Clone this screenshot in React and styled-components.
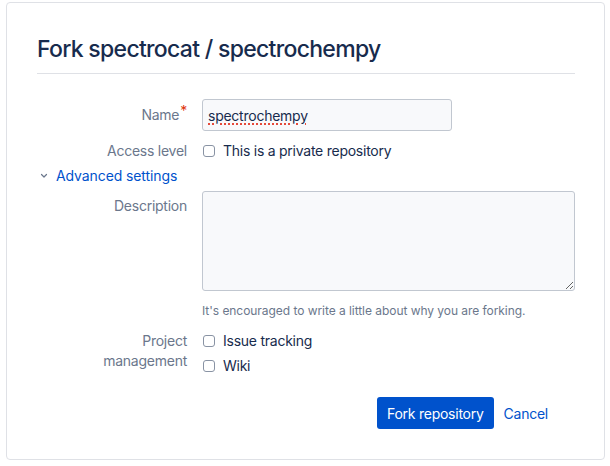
import React from 'react';
import styled, { createGlobalStyle } from 'styled-components';

const GlobalStyle = createGlobalStyle`
  body {
    margin: 0;
    background: #fff;
    font-family: Inter, "Noto Sans", "Liberation Sans", sans-serif;
    color: #172b4d;
  }
`;

const Page = styled.div`
  padding: 2px 6px 0 6px;
  width: 610px;
  box-sizing: border-box;
`;

const Card = styled.div`
  width: 599px;
  box-sizing: border-box;
  border: 1px solid #dfe1e6;
  border-radius: 4px;
  padding: 32px 29px 30px 30px;
`;

const Title = styled.h1`
  margin: 0;
  font-size: 23px;
  line-height: 28px;
  font-weight: 500;
  letter-spacing: -0.7px;
  color: #172b4d;
  padding-bottom: 10px;
  border-bottom: 1px solid #dfe1e6;
`;

const Form = styled.form`
  display: flex;
  flex-direction: column;
  margin-top: 25px;
  letter-spacing: -0.25px;
`;

const Row = styled.div`
  display: grid;
  grid-template-columns: 150px 1fr;
  column-gap: 15px;
  align-items: ${({ $center }) => ($center ? 'center' : 'start')};
  margin-top: ${({ $mt }) => $mt || 0}px;
`;

const Label = styled.label`
  text-align: right;
  font-size: 14px;
  line-height: 20px;
  color: #6b778c;
  padding-top: ${({ $pt }) => $pt || 0}px;
`;

const Required = styled.span`
  color: #de350b;
  font-size: 14px;
  vertical-align: top;
  position: relative;
  top: -4px;
  margin-left: 1px;
`;

const Field = styled.div`
  width: 250px;
  height: 32px;
  box-sizing: border-box;
  border: 1px solid #c1c7d0;
  border-radius: 3px;
  background: #f8f9fb;
  padding: 0 5px;
  display: flex;
  align-items: center;
  font-size: 14px;
  letter-spacing: -0.25px;
  color: #172b4d;
`;

const Misspelled = styled.span`
  text-decoration-line: underline;
  text-decoration-style: dotted;
  text-decoration-color: #e5493a;
  text-decoration-thickness: 2px;
  text-underline-offset: 3px;
`;

const TextArea = styled.textarea`
  width: 373px;
  height: 100px;
  box-sizing: border-box;
  border: 1px solid #c1c7d0;
  border-radius: 3px;
  background: #f8f9fb;
  font-family: inherit;
  font-size: 14px;
  display: block;
  outline: none;
`;

const Help = styled.div`
  font-size: 12px;
  line-height: 16px;
  color: #6b778c;
  letter-spacing: -0.05px;
`;

const Checks = styled.div`
  display: flex;
  flex-direction: column;
  gap: 5px;
`;

const Check = styled.label`
  display: flex;
  align-items: center;
  gap: 8px;
  font-size: 14px;
  line-height: 20px;
  color: #172b4d;
  padding-left: 1px;
`;

const Box = styled.input.attrs({ type: 'checkbox' })`
  appearance: none;
  margin: 0;
  width: 12px;
  height: 12px;
  border: 1px solid #8993a4;
  border-radius: 3px;
  background: #fff;
  box-sizing: border-box;
`;

const Toggle = styled.button`
  display: flex;
  align-items: center;
  gap: 8px;
  border: 0;
  background: none;
  padding: 0 0 0 3px;
  margin-top: 5px;
  font-family: inherit;
  font-size: 14px;
  line-height: 20px;
  letter-spacing: -0.1px;
  color: #0052cc;
  cursor: pointer;
  align-self: flex-start;
`;

const Actions = styled.div`
  display: flex;
  justify-content: flex-end;
  align-items: center;
  margin-top: 21px;
  padding-right: 17px;
`;

const Button = styled.button`
  height: 32px;
  border: 0;
  border-radius: 3px;
  padding: 0 10px;
  font-family: inherit;
  font-size: 14px;
  letter-spacing: -0.25px;
  cursor: pointer;
  background: ${({ $primary }) => ($primary ? '#0052cc' : 'transparent')};
  color: ${({ $primary }) => ($primary ? '#fff' : '#0052cc')};
`;

const Chevron = () => (
  <svg width="8" height="6" viewBox="0 0 8 6" fill="none">
    <path d="M1.5 1.5 L4 4 L6.5 1.5" stroke="#6b778c" strokeWidth="1.2" strokeLinecap="round" strokeLinejoin="round" />
  </svg>
);

export default function App() {
  return (
    <Page>
      <GlobalStyle />
      <Card>
        <Title>Fork spectrocat / spectrochempy</Title>
        <Form onSubmit={(e) => e.preventDefault()}>
          <Row $center>
            <Label>Name<Required>*</Required></Label>
            <Field><Misspelled>spectrochempy</Misspelled></Field>
          </Row>
          <Row $center $mt={10}>
            <Label>Access level</Label>
            <Check><Box />This is a private repository</Check>
          </Row>
          <Toggle type="button"><Chevron />Advanced settings</Toggle>
          <Row $mt={5}>
            <Label $pt={5}>Description</Label>
            <TextArea />
          </Row>
          <Row $mt={12}>
            <span />
            <Help>It's encouraged to write a little about why you are forking.</Help>
          </Row>
          <Row $mt={12}>
            <Label>Project<br />management</Label>
            <Checks>
              <Check><Box />Issue tracking</Check>
              <Check><Box />Wiki</Check>
            </Checks>
          </Row>
          <Actions>
            <Button $primary type="submit">Fork repository</Button>
            <Button type="button">Cancel</Button>
          </Actions>
        </Form>
      </Card>
    </Page>
  );
}
